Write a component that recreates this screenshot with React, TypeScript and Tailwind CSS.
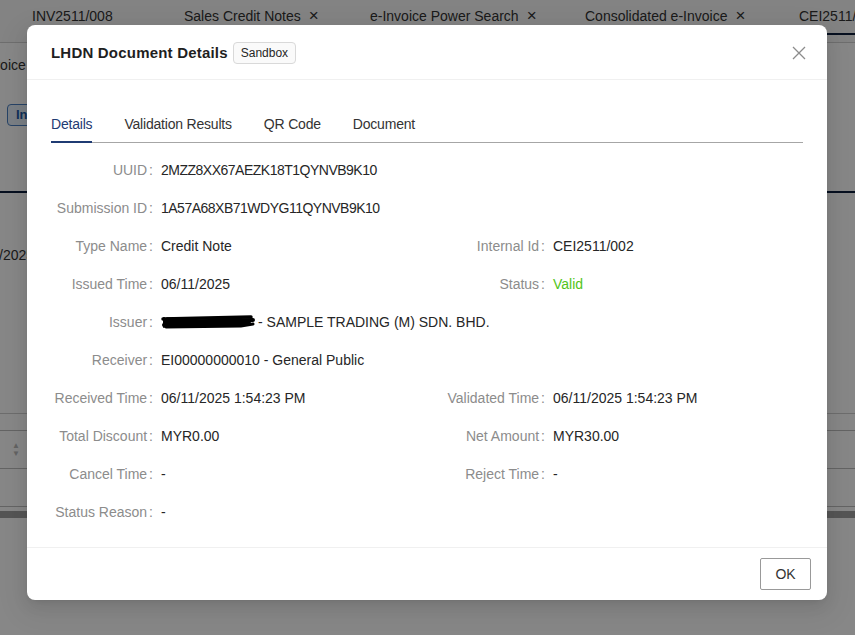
import { ReactNode } from "react";

type Cell = { label: string; value: ReactNode };
type Row = { full?: Cell; left?: Cell; right?: Cell };

function Redacted() {
  return (
    <svg width="94" height="18" viewBox="0 0 94 18" className="inline-block align-middle -mt-[3px]">
      <path d="M2 6 L90 4" stroke="#000" strokeWidth="3.5" strokeLinecap="round" fill="none" />
      <path d="M4 9 L92 7" stroke="#000" strokeWidth="4" strokeLinecap="round" fill="none" />
      <path d="M3 12 L88 10" stroke="#000" strokeWidth="4" strokeLinecap="round" fill="none" />
      <path d="M5 14 L80 13 L92 11" stroke="#000" strokeWidth="3" strokeLinecap="round" fill="none" />
      <path d="M3 5 L3 14" stroke="#000" strokeWidth="2" strokeLinecap="round" fill="none" />
      <path d="M6 5 L30 6" stroke="#000" strokeWidth="1.5" strokeLinecap="round" fill="none" />
    </svg>
  );
}

const rows: Row[] = [
  { full: { label: "UUID", value: <span className="tracking-[-0.5px]">2MZZ8XX67AEZK18T1QYNVB9K10</span> } },
  { full: { label: "Submission ID", value: <span className="tracking-[-0.5px]">1A57A68XB71WDYG11QYNVB9K10</span> } },
  {
    left: { label: "Type Name", value: "Credit Note" },
    right: { label: "Internal Id", value: "CEI2511/002" },
  },
  {
    left: { label: "Issued Time", value: "06/11/2025" },
    right: { label: "Status", value: <span className="text-[#52c41a]">Valid</span> },
  },
  {
    full: {
      label: "Issuer",
      value: (
        <span>
          <Redacted />
          <span className="ml-[3px]">- SAMPLE TRADING (M) SDN. BHD.</span>
        </span>
      ),
    },
  },
  { full: { label: "Receiver", value: "EI00000000010 - General Public" } },
  {
    left: { label: "Received Time", value: "06/11/2025 1:54:23 PM" },
    right: { label: "Validated Time", value: "06/11/2025 1:54:23 PM" },
  },
  {
    left: { label: "Total Discount", value: "MYR0.00" },
    right: { label: "Net Amount", value: "MYR30.00" },
  },
  {
    left: { label: "Cancel Time", value: "-" },
    right: { label: "Reject Time", value: "-" },
  },
  { full: { label: "Status Reason", value: "-" } },
];

function Item({ cell, labelWidth }: { cell: Cell; labelWidth: string }) {
  return (
    <div className="flex leading-[22px]">
      <div className={`${labelWidth} shrink-0 text-right text-[#8c8c8c] whitespace-nowrap`}>
        {cell.label}
        <span className="ml-[2px] mr-2">:</span>
      </div>
      <div className="text-[#262626] whitespace-nowrap">{cell.value}</div>
    </div>
  );
}

function CloseIcon() {
  return (
    <svg width="14" height="14" viewBox="0 0 14 14">
      <path d="M1 1 L13 13 M13 1 L1 13" stroke="#8c8c8c" strokeWidth="1.3" fill="none" />
    </svg>
  );
}

function BackgroundPage() {
  const tabs = [
    { t: "INV2511/008", w: "w-[152px]", x: false },
    { t: "Sales Credit Notes", w: "w-[186px]", x: true },
    { t: "e-Invoice Power Search", w: "w-[215px]", x: true },
    { t: "Consolidated e-Invoice", w: "w-[214px]", x: true },
  ];
  return (
    <div className="h-[635px] w-full bg-white overflow-hidden text-[14px] text-[#333]">
      <div className="h-[43px] border-b border-[#d0d0d0] flex items-start pl-8 bg-[#f7f7f7]">
        {tabs.map((tab) => (
          <div key={tab.t} className={`${tab.w} shrink-0 h-[33px] flex items-center gap-2 whitespace-nowrap`}>
            <span>{tab.t}</span>
            {tab.x && <span className="text-[17px] leading-none -mt-[3px]">×</span>}
          </div>
        ))}
        <div className="shrink-0 h-[35px] flex items-start pt-[6px] border-b-2 border-[#0f1f3d] whitespace-nowrap">
          CEI2511/002
        </div>
      </div>
      <div className="h-[45px] flex items-center -ml-[31px] whitespace-nowrap">e-Invoice</div>
      <div className="pl-[7px] mt-[16px]">
        <div className="inline-flex h-[22px] items-center px-2 border border-[#4a7fc1] bg-[#e6f0fb] text-[#1f5ca8] font-bold text-[13px] rounded-sm">
          Info
        </div>
      </div>
      <div className="mt-[65px] border-b-2 border-[#0f1f3d]" />
      <div className="mt-[52px] -ml-[35px] whitespace-nowrap">06/11/2025</div>
      <div className="mt-[147px] border-b border-[#cfcfcf]" />
      <div className="mt-[16px] border-b border-[#bdbdbd]" />
      <div className="h-[38px] flex items-center pl-[12px] border-b border-[#bdbdbd]">
        <span className="flex flex-col text-[8px] leading-[8px] text-[#bbb]">
          <span>▲</span>
          <span>▼</span>
        </span>
      </div>
      <div className="h-[38px] border-b border-[#bdbdbd]" />
      <div className="mt-[4px] h-[7px] bg-[#a0a0a0]" />
    </div>
  );
}

export default function App() {
  return (
    <div className="relative h-[635px] w-full overflow-hidden font-['Liberation_Sans',Arial,sans-serif]">
      <BackgroundPage />
      <div className="absolute inset-0 bg-[rgba(0,0,0,0.47)]" />

      <div className="absolute left-[27px] top-[25px] w-[800px] h-[575px] bg-white rounded-lg flex flex-col shadow-[0_6px_16px_0_rgba(0,0,0,0.08),0_3px_6px_-4px_rgba(0,0,0,0.12),0_9px_28px_8px_rgba(0,0,0,0.05)]">
        <div className="h-[55px] shrink-0 flex items-center px-6 pt-[2px] border-b border-[#f0f0f0]">
          <div className="text-[15px] font-bold tracking-[0.2px] text-[#1f1f1f]">LHDN Document Details</div>
          <div className="ml-[5px] h-[22px] px-[7px] flex items-center text-[12px] text-[#262626] bg-[#fafafa] border border-[#d9d9d9] rounded">
            Sandbox
          </div>
          <div className="ml-auto mr-[-3px] flex items-center">
            <CloseIcon />
          </div>
        </div>

        <div className="flex-1 px-6 pt-[27px] text-[14px]">
          <div className="flex gap-8 border-b border-[#a6a6a6] tracking-[-0.2px]">
            <div className="relative py-[7px] leading-[21px] text-[#1f3b73]">
              Details
              <div className="absolute left-0 right-0 -bottom-px h-[2px] bg-[#1f3b73]" />
            </div>
            <div className="py-[7px] leading-[21px] text-[#333]">Validation Results</div>
            <div className="py-[7px] leading-[21px] text-[#333]">QR Code</div>
            <div className="py-[7px] leading-[21px] text-[#333]">Document</div>
          </div>

          <div className="mt-[16px] flex flex-col">
            {rows.map((r, i) => (
              <div key={i} className="grid grid-cols-2 pb-4">
                {r.full ? (
                  <div className="col-span-2">
                    <Item cell={r.full} labelWidth="w-[110px]" />
                  </div>
                ) : (
                  <>
                    <Item cell={r.left!} labelWidth="w-[110px]" />
                    <Item cell={r.right!} labelWidth="w-[126px]" />
                  </>
                )}
              </div>
            ))}
          </div>
        </div>

        <div className="h-[53px] shrink-0 border-t border-[#f0f0f0] flex items-center justify-end pr-4">
          <button className="h-[32px] w-[51px] border border-[#999] rounded-[2px] bg-white text-[14px] text-[#333]">
            OK
          </button>
        </div>
      </div>
    </div>
  );
}
